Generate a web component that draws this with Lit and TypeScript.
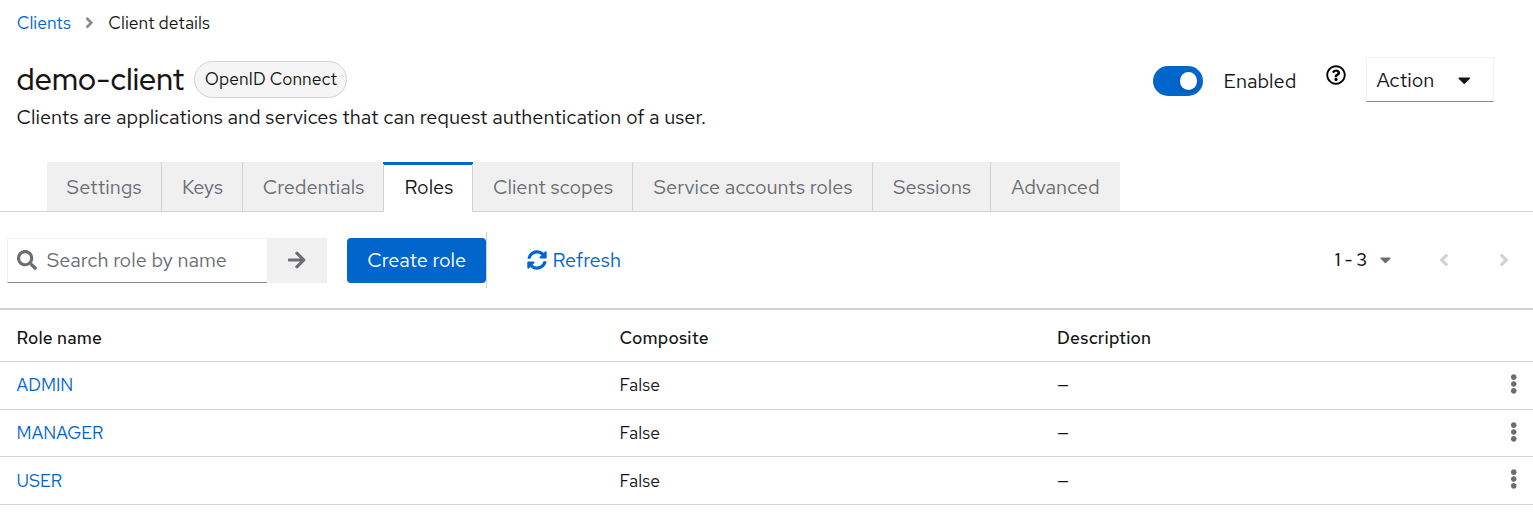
import { LitElement, html, css } from "lit";
import { customElement } from "lit/decorators.js";
import { classMap } from "lit/directives/class-map.js";

const icons = {
  angleRight: ["0 0 256 512", "M224.3 273l-136 136c-9.4 9.4-24.6 9.4-33.9 0l-22.6-22.6c-9.4-9.4-9.4-24.6 0-33.9l96.4-96.4-96.4-96.4c-9.4-9.4-9.4-24.6 0-33.9L54.3 103c9.4-9.4 24.6-9.4 33.9 0l136 136c9.5 9.4 9.5 24.6.1 34z"],
  sync: ["0 0 512 512", "M370.72 133.28C339.458 104.008 298.888 87.962 255.848 88c-77.458.068-144.328 53.178-162.791 126.85-1.344 5.363-6.122 9.15-11.651 9.15H24.103c-7.498 0-13.194-6.807-11.807-14.176C33.933 94.924 134.813 8 256 8c66.448 0 126.791 26.136 171.315 68.685L463.03 40.97C478.149 25.851 504 36.559 504 57.941V192c0 13.255-10.745 24-24 24H345.941c-21.382 0-32.09-25.851-16.971-40.971l41.75-41.749zM32 296h134.059c21.382 0 32.09 25.851 16.971 40.971l-41.75 41.75c31.262 29.273 71.835 45.319 114.876 45.28 77.418-.07 144.315-53.144 162.787-126.849 1.344-5.363 6.122-9.15 11.651-9.15h57.304c7.498 0 13.194 6.807 11.807 14.176C478.067 417.076 377.187 504 256 504c-66.448 0-126.791-26.136-171.315-68.685L48.97 471.03C33.851 486.149 8 475.441 8 454.059V320c0-13.255 10.745-24 24-24z"],
  search: ["0 0 512 512", "M505 442.7L405.3 343c-4.5-4.5-10.6-7-17-7H372c27.6-35.3 44-79.7 44-128C416 93.1 322.9 0 208 0S0 93.1 0 208s93.1 208 208 208c48.3 0 92.7-16.4 128-44v16.3c0 6.4 2.5 12.5 7 17l99.7 99.7c9.4 9.4 24.6 9.4 33.9 0l28.3-28.3c9.4-9.4 9.4-24.6.1-34zM208 336c-70.7 0-128-57.2-128-128 0-70.7 57.2-128 128-128 70.7 0 128 57.2 128 128 0 70.7-57.2 128-128 128z"],
  arrowRight: ["0 0 448 512", "M190.5 66.9l22.2-22.2c9.4-9.4 24.6-9.4 33.9 0L441 239c9.4 9.4 9.4 24.6 0 33.9L246.6 467.3c-9.4 9.4-24.6 9.4-33.9 0l-22.2-22.2c-9.5-9.5-9.3-25 .4-34.3L311.4 296H24c-13.3 0-24-10.7-24-24v-32c0-13.3 10.7-24 24-24h287.4L190.9 101.2c-9.8-9.3-10-24.8-.4-34.3z"],
  caretDown: ["0 0 320 512", "M31.3 192h257.3c17.8 0 26.7 21.5 14.1 34.1L174.1 354.7c-7.8 7.8-20.5 7.8-28.3 0L17.2 226.1C4.6 213.5 13.5 192 31.3 192z"],
  kebab: ["0 0 192 512", "M96 184c39.8 0 72 32.2 72 72s-32.2 72-72 72-72-32.2-72-72 32.2-72 72-72zM24 80c0 39.8 32.2 72 72 72s72-32.2 72-72S135.8 8 96 8 24 40.2 24 80zm0 352c0 39.8 32.2 72 72 72s72-32.2 72-72-32.2-72-72-72-72 32.2-72 72z"],
  help: ["0 0 512 512", "M256 8C119.043 8 8 119.083 8 256c0 136.997 111.043 248 248 248s248-111.003 248-248C504 119.083 392.957 8 256 8zm0 448c-110.532 0-200-89.431-200-200 0-110.495 89.472-200 200-200 110.491 0 200 89.471 200 200 0 110.53-89.431 200-200 200zm107.244-255.2c0 67.052-72.421 68.084-72.421 92.863V300c0 6.627-5.373 12-12 12h-45.647c-6.627 0-12-5.373-12-12v-8.659c0-35.745 27.1-50.034 47.579-61.516 17.561-9.845 28.324-16.541 28.324-29.579 0-17.246-21.999-28.693-39.784-28.693-23.189 0-33.894 10.977-48.942 29.969-4.057 5.12-11.46 6.071-16.666 2.124l-27.824-21.098c-5.107-3.872-6.251-11.066-2.644-16.363C184.846 131.491 214.94 112 261.794 112c49.071 0 101.45 38.304 101.45 88.8zM298 368c0 23.159-18.841 42-42 42s-42-18.841-42-42 18.841-42 42-42 42 18.841 42 42z"],
};

const icon = (name: keyof typeof icons, cls = "") => html`<svg class="icon ${cls}" viewBox=${icons[name][0]} fill="currentColor" aria-hidden="true"><path d=${icons[name][1]}></path></svg>`;

const TABS: [string, number][] = [
  ["Settings", 115], ["Keys", 81], ["Credentials", 141], ["Roles", 90],
  ["Client scopes", 160], ["Service accounts roles", 240], ["Sessions", 118], ["Advanced", 129],
];
const ROLES = ["ADMIN", "MANAGER", "USER"];

@customElement("app-root")
export class AppRoot extends LitElement {
  static styles = css`
    :host { display: block; height: 516px; overflow: hidden; background: #fff; color: #151515;
      font: 400 20px/30px "Red Hat Text", "Open Sans", sans-serif; font-variant-ligatures: none; }
    * { box-sizing: border-box; }
    button { font: inherit; color: inherit; border: 0; margin: 0; padding: 0; background: none; }
    a { color: #06c; text-decoration: none; }
    .icon { display: block; height: 20px; flex: none; }
    .crumbs { display: flex; align-items: center; height: 26px; margin: 10px 0 0 16.7px; font-size: 17.5px; line-height: 26px; }
    .sep { height: 17.5px; margin: 0 14.5px 0 14px; color: #8a8d90; }
    .head { display: flex; justify-content: space-between; height: 66px; padding: 21px 39px 0 16.5px; }
    .title { display: flex; align-items: center; height: 45px; }
    h1 { margin: 0; font: 500 30px/39px "Red Hat Display", "Open Sans", sans-serif; letter-spacing: .2px; }
    .label { height: 37px; width: 153px; margin-left: 9.5px; padding: 0 10px; border: 1px solid #d2d2d2; border-radius: 19px; background: #f5f5f5; font-size: 17.5px; line-height: 34px; white-space: nowrap; }
    .tools { display: flex; height: 45px; }
    .switch { display: flex; justify-content: flex-end; width: 50px; height: 30px; margin-top: 9px; padding: 6px; border-radius: 15px; background: #06c; }
    .knob { width: 17.5px; height: 17.5px; border-radius: 50%; background: #fff; box-shadow: 0 2px 4px rgba(0, 0, 0, .16); }
    .state { width: 123px; padding: 9px 0 0 20.5px; }
    .help { margin-top: 8px; color: #000; }
    .action { display: flex; align-items: center; justify-content: space-between; width: 128px; height: 45px; margin-left: 20px; padding: 0 23px 0 9.5px; border: 1px solid #f0f0f0; border-bottom-color: #8a8d90; }
    .desc { height: 30px; padding-left: 16.5px; }
    .tabs { display: flex; height: 50px; margin-top: 30px; padding-left: 47px; border-bottom: 1px solid #d2d2d2; }
    .tab { height: 49px; padding: 1px 0 0 1px; border-right: 1px solid #d2d2d2; background: #f0f0f0; color: #6a6e73; white-space: nowrap; text-align: center; }
    .tab:first-child { padding-left: 0; }
    .tab:last-child { border-right: 0; padding-left: 0; }
    .tab.current { height: 50px; margin-left: -1px; padding: 0 0 1px 2px; background: linear-gradient(#06c, #06c) no-repeat border-box 0 0 / 100% 3px, #fff; border-style: solid; border-width: 0 1px; border-image: linear-gradient(#06c 3px, #d2d2d2 3px) 1; color: #151515; }
    .toolbar { display: flex; align-items: center; height: 96px; padding: 0 24px 0 7px; }
    .search { display: flex; align-items: center; width: 260px; height: 45px; padding-left: 9px; gap: 9.7px; border: 1px solid #f0f0f0; border-right: 0; border-bottom-color: #8a8d90; color: #6a6e73; }
    .go { display: flex; align-items: center; justify-content: center; width: 60px; height: 45px; background: #f0f0f0; color: #6a6e73; }
    .create { width: 139px; height: 45px; margin-left: 20px; padding-left: .5px; border-radius: 4px; background: #06c; color: #fff; }
    .rule { width: 1px; height: 56px; background: #d2d2d2; }
    .refresh { display: flex; align-items: center; gap: 5.5px; margin-left: 40px; color: #06c; }
    .pager { display: flex; align-items: center; margin-left: auto; color: #6a6e73; }
    .range { font-weight: 500; font-size: 17.5px; color: #151515; }
    .small { height: 17.5px; margin-left: 13px; }
    .prev, .next { color: #d2d2d2; }
    .prev { margin-left: 48px; transform: scaleX(-1); }
    .next { margin-left: 50px; }
    table { width: 1533px; border-collapse: separate; border-spacing: 0; table-layout: fixed; border-top: 2px solid #d2d2d2; font-size: 17.5px; line-height: 26px; }
    th, td { height: 48px; padding: 0; border-bottom: 1px solid #d2d2d2; text-align: left; vertical-align: middle; }
    th { height: 52px; padding-top: 5px; font-weight: 500; letter-spacing: .18px; }
    tr.first td { padding-bottom: 2px; }
    tr.short td { height: 47px; }
    .c1 { width: 619.5px; padding-left: 16.6px; }
    .c2 { width: 437.5px; }
    .c4 { width: 23px; color: #6a6e73; }
    tr td.c4 { padding-bottom: 3px; }
  `;

  render() {
    return html`
      <nav class="crumbs"><a href="#">Clients</a>${icon("angleRight", "sep")}<span>Client details</span></nav>
      <header class="head">
        <div class="title"><h1>demo-client</h1><span class="label">OpenID Connect</span></div>
        <div class="tools">
          <span class="switch"><span class="knob"></span></span>
          <span class="state">Enabled</span>
          ${icon("help", "help")}
          <button class="action"><span>Action</span>${icon("caretDown")}</button>
        </div>
      </header>
      <div class="desc">Clients are applications and services that can request authentication of a user.</div>
      <div class="tabs">
        ${TABS.map(([name, width]) => html`<button class=${classMap({ tab: true, current: name === "Roles" })} style="width:${width}px">${name}</button>`)}
      </div>
      <div class="toolbar">
        <div class="search">${icon("search")}<span>Search role by name</span></div>
        <button class="go">${icon("arrowRight")}</button>
        <button class="create">Create role</button>
        <span class="rule"></span>
        <button class="refresh">${icon("sync")}<span>Refresh</span></button>
        <div class="pager">
          <span class="range">1 - 3</span>${icon("caretDown", "small")}
          ${icon("angleRight", "prev")}${icon("angleRight", "next")}
        </div>
      </div>
      <table>
        <tr><th class="c1">Role name</th><th class="c2">Composite</th><th>Description</th><th class="c4"></th></tr>
        ${ROLES.map((role, i) => html`<tr class=${classMap({ first: i === 0, short: i === 1 })}>
          <td class="c1"><a href="#">${role}</a></td><td>False</td><td>—</td><td class="c4">${icon("kebab")}</td>
        </tr>`)}
      </table>
    `;
  }
}
